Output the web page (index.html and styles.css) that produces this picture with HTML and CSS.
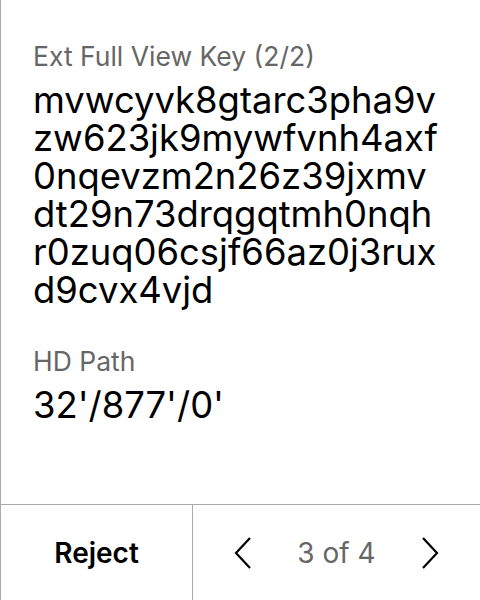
FILE: index.html
```html
<!DOCTYPE html>
<html>
<head>
<meta charset="utf-8">
<link rel="stylesheet" href="styles.css">
</head>
<body>
<div class="screen">
  <div class="content">
    <div class="field">
      <div class="label">Ext Full View Key (2/2)</div>
      <div class="value">mvwcyvk8gtarc3pha9v<br>zw623jk9mywfvnh4axf<br>0nqevzm2n26z39jxmv<br>dt29n73drqgqtmh0nqh<br>r0zuq06csjf66az0j3rux<br>d9cvx4vjd</div>
    </div>
    <div class="field">
      <div class="label">HD Path</div>
      <div class="value">32'/877'/0'</div>
    </div>
  </div>
  <div class="footer">
    <div class="reject">Reject</div>
    <div class="pager">
      <svg class="chev" width="18" height="34" viewBox="0 0 18 34"><path d="M16 2 L2 17 L16 32" fill="none" stroke="#000" stroke-width="2.2"/></svg>
      <span class="count">3 of 4</span>
      <svg class="chev" width="18" height="34" viewBox="0 0 18 34"><path d="M2 2 L16 17 L2 32" fill="none" stroke="#000" stroke-width="2.2"/></svg>
    </div>
  </div>
</div>
</body>
</html>
```
FILE: styles.css
```css
html, body { margin: 0; padding: 0; background: #fff; }
.screen {
  width: 480px; height: 600px;
  box-sizing: border-box;
  border-left: 1px solid #aaa;
  display: flex; flex-direction: column;
  font-family: Inter, "Noto Sans", sans-serif;
}
.content { flex: 1; padding: 40px 0 0 32px; }
.field { margin-bottom: 36px; }
.label { font-size: 26.5px; line-height: 32px; color: #666; }
.value { font-size: 36.4px; line-height: 38px; color: #000; margin-top: 9px; }
.footer {
  height: 95px; border-top: 1px solid #aaa;
  display: flex;
}
.reject {
  width: 191px; border-right: 1px solid #aaa;
  display: flex; align-items: center; justify-content: center;
  font-size: 28px; font-weight: 600; color: #000;
  padding-top: 1px;
}
.pager {
  flex: 1; display: flex; align-items: center; justify-content: space-between;
  padding: 0 41px 0 41px;
}
.chev { display: block; }
.count { font-size: 28px; color: #666; }
```
